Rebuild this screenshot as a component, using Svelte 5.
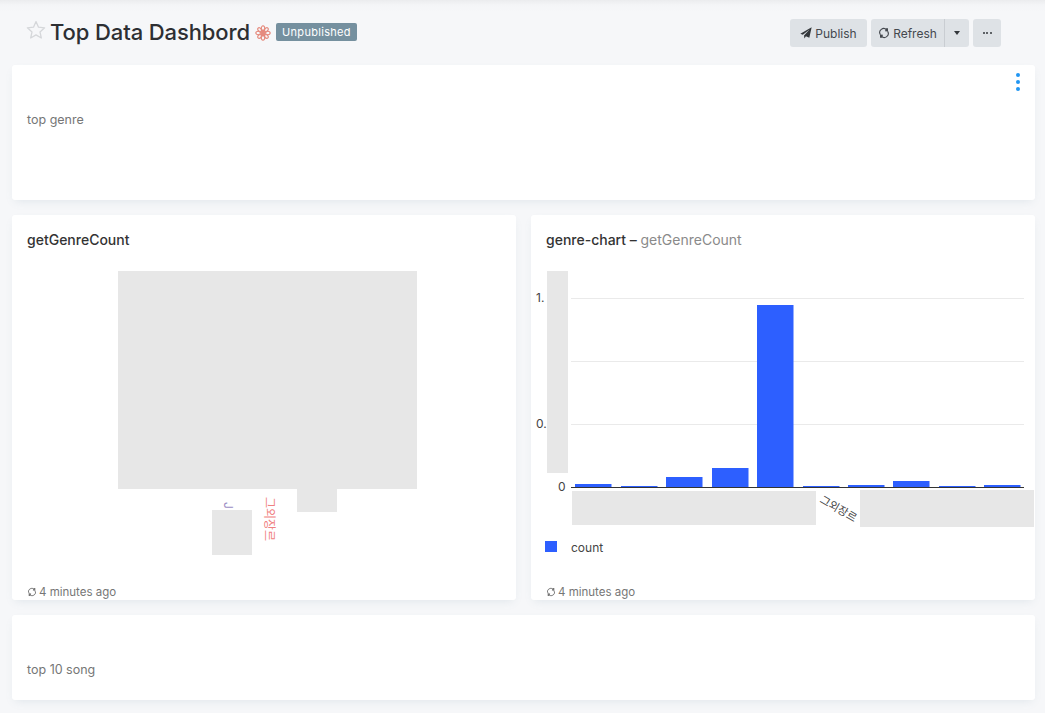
<script>
  const bars = [
    [575, 484], [621, 486], [666, 477], [712, 468], [757, 305],
    [803, 486], [848, 485], [893, 481], [939, 486], [984, 485]
  ];
</script>

{#snippet refresh()}
  <svg class="ico" viewBox="0 0 12 12" aria-hidden="true">
    <path d="M2.4 7.6A3.9 3.9 0 0 1 8.6 2.9" fill="none" stroke="currentColor" stroke-width="1.1" />
    <path d="M9.6 4.4A3.9 3.9 0 0 1 3.4 9.1" fill="none" stroke="currentColor" stroke-width="1.1" />
    <path d="M8 1.2 10 1.2 10 4.4 7 4.2Z" fill="currentColor" />
    <path d="M4 10.8 2 10.8 2 7.6 5 7.8Z" fill="currentColor" />
  </svg>
{/snippet}

<div class="page">
  <header class="head">
    <div class="title">
      <svg class="star" viewBox="0 0 20 20" aria-hidden="true">
        <path d="M10 1.6 12.5 7.2 18.6 7.8 14 11.9 15.3 18 10 14.9 4.7 18 6 11.9 1.4 7.8 7.5 7.2Z" fill="none" stroke="#d5d7da" stroke-width="1.3" stroke-linejoin="round" />
      </svg>
      <h1>Top Data Dashbord</h1>
      <svg class="spin" viewBox="0 0 16 16" aria-hidden="true">
        <g fill="none" stroke="#e58a7d" stroke-width="1.1">
          <ellipse cx="8" cy="4" rx="1.8" ry="3.2" />
          <ellipse cx="8" cy="12" rx="1.8" ry="3.2" />
          <ellipse cx="4" cy="8" rx="3.2" ry="1.8" />
          <ellipse cx="12" cy="8" rx="3.2" ry="1.8" />
          <ellipse cx="5.2" cy="5.2" rx="1.7" ry="3" transform="rotate(-45 5.2 5.2)" />
          <ellipse cx="10.8" cy="10.8" rx="1.7" ry="3" transform="rotate(-45 10.8 10.8)" />
          <ellipse cx="10.8" cy="5.2" rx="1.7" ry="3" transform="rotate(45 10.8 5.2)" />
          <ellipse cx="5.2" cy="10.8" rx="1.7" ry="3" transform="rotate(45 5.2 10.8)" />
        </g>
      </svg>
      <span class="badge">Unpublished</span>
    </div>
    <div class="actions">
      <button class="btn publish">
        <svg class="ico plane" viewBox="0 0 14 14" aria-hidden="true">
          <path d="M13.6.4 10.9 12.6 6.9 10.9 5.1 13.3 4.7 9.8 11.2 3 3.3 9.1.4 7.9Z" fill="currentColor" />
        </svg>
        Publish
      </button>
      <div class="split">
        <button class="btn refresh">{@render refresh()} Refresh</button>
        <button class="btn caret" aria-label="More refresh options"><span class="tri"></span></button>
      </div>
      <button class="btn more" aria-label="More options">
        <span class="dots"><i></i><i></i><i></i></span>
      </button>
    </div>
  </header>

  <section class="card text-one">
    <p>top genre</p>
    <span class="kebab"><i></i><i></i><i></i></span>
  </section>

  <div class="row">
    <section class="card viz">
      <h2>getGenreCount</h2>
      <div class="canvas">
        <svg viewBox="0 0 504 300" aria-hidden="false">
          <rect x="106" y="0" width="299" height="218" fill="#e7e7e7" />
          <rect x="285" y="218" width="40" height="23" fill="#e7e7e7" />
          <rect x="200" y="239" width="40" height="45" fill="#e7e7e7" />
          <text class="pie-j" transform="translate(212 231) rotate(90)">J</text>
          <text class="pie-other" transform="translate(253 226) rotate(90)">그외장르</text>
        </svg>
      </div>
      <div class="ago">{@render refresh()} 4 minutes ago</div>
    </section>

    <section class="card viz">
      <h2>genre-chart <b>–</b> <span>getGenreCount</span></h2>
      <div class="canvas">
        <svg viewBox="531 271 504 300">
          <line x1="571" x2="1024" y1="298.5" y2="298.5" class="grid" />
          <line x1="571" x2="1024" y1="361.5" y2="361.5" class="grid" />
          <line x1="571" x2="1024" y1="424.5" y2="424.5" class="grid" />
          <text class="tick" x="536" y="302">1.</text>
          <text class="tick" x="536" y="428">0.</text>
          <text class="tick" x="558" y="491">0</text>
          {#each bars as [x, top]}
            <rect {x} y={top} width="36.5" height={487 - top} fill="#2d5fff" />
          {/each}
          <line x1="571" x2="1024" y1="487.5" y2="487.5" stroke="#333" />
          <rect x="547" y="271" width="21" height="202" fill="#e7e7e7" />
          <rect x="572" y="491" width="244" height="34" fill="#e7e7e7" />
          <rect x="860" y="490" width="174" height="37" fill="#e7e7e7" />
          <text class="cat" transform="translate(819 502) rotate(30)">그외장르</text>
          <rect x="545" y="541" width="12" height="11" fill="#2d5fff" />
          <text class="legend" x="571" y="552">count</text>
        </svg>
      </div>
      <div class="ago">{@render refresh()} 4 minutes ago</div>
    </section>
  </div>

  <section class="card text-two">
    <p>top 10 song</p>
  </section>
</div>

<style>
  :global(body) {
    margin: 0;
    background: #f6f7f9;
  }
  .page {
    height: 713px;
    overflow: hidden;
    box-sizing: border-box;
    padding: 0 10px 0 12px;
    font-family: Inter, "Noto Sans CJK KR", sans-serif;
    color: #333;
    background: linear-gradient(#ebecee 0, #f4f5f7 5px, #f6f7f9 12px);
  }
  .head {
    height: 65px;
    display: flex;
    justify-content: space-between;
    box-sizing: border-box;
    padding: 19px 34px 0 14px;
    margin-right: -0px;
  }
  .title {
    display: flex;
    align-items: flex-start;
  }
  .star {
    width: 20px;
    height: 20px;
    margin-top: 1px;
    margin-right: 4px;
  }
  h1 {
    margin: 0;
    font-size: 22px;
    font-weight: 500;
    line-height: 26px;
    color: #2d2f33;
    letter-spacing: -0.1px;
  }
  .spin {
    width: 16px;
    height: 16px;
    margin: 6px 5px 0 5px;
  }
  .badge {
    margin-top: 4px;
    height: 18px;
    line-height: 18px;
    padding: 0 6px;
    font-size: 11px;
    letter-spacing: 0.3px;
    color: #fff;
    background: #75909f;
    border-radius: 2px;
  }
  .actions {
    display: flex;
    gap: 4px;
    align-items: flex-start;
  }
  .btn {
    height: 28px;
    border: 0;
    padding: 0;
    background: #dee2e6;
    color: #44484e;
    font: 12px Inter, sans-serif;
    display: flex;
    align-items: center;
    justify-content: center;
    gap: 3px;
    border-radius: 3px;
  }
  .publish {
    width: 77px;
  }
  .split {
    display: flex;
  }
  .refresh {
    width: 74px;
    border-radius: 3px 0 0 3px;
    border-right: 1px solid #c9cdd2;
  }
  .caret {
    width: 24px;
    border-radius: 0 3px 3px 0;
  }
  .tri {
    width: 0;
    height: 0;
    border: 4px solid transparent;
    border-top: 4px solid #33373b;
    border-bottom: 0;
    border-left-width: 3.5px;
    border-right-width: 3.5px;
  }
  .more {
    width: 28px;
  }
  .dots {
    display: flex;
    gap: 1.5px;
  }
  .dots i {
    width: 2px;
    height: 2px;
    background: #33373b;
    border-radius: 50%;
  }
  .ico {
    width: 12px;
    height: 12px;
    flex: none;
  }
  .plane {
    width: 12px;
    height: 12px;
    color: #33373b;
  }
  .card {
    position: relative;
    width: 1023px;
    background: #fff;
    border-radius: 3px;
    box-shadow: 0 4px 9px -3px rgba(102, 136, 153, 0.15);
    box-sizing: border-box;
  }
  .card p {
    margin: 0;
    font-size: 12.5px;
    color: #767676;
    padding-left: 15px;
  }
  .text-one {
    height: 135px;
    padding-top: 47px;
  }
  .text-two {
    height: 85px;
    margin-top: 15px;
    padding-top: 47px;
  }
  .kebab {
    position: absolute;
    top: 8px;
    right: 15px;
    display: flex;
    flex-direction: column;
    gap: 3px;
  }
  .kebab i {
    width: 4px;
    height: 4px;
    border-radius: 50%;
    background: #2196f3;
  }
  .row {
    display: flex;
    gap: 15px;
    margin-top: 15px;
  }
  .viz {
    width: 504px;
    height: 385px;
    padding-top: 16px;
  }
  h2 {
    margin: 0;
    padding-left: 15px;
    font-size: 14px;
    line-height: 17px;
    font-weight: 500;
    color: #333;
  }
  h2 span {
    color: #8a8a8a;
    font-weight: 400;
  }
  h2 b {
    font-weight: 500;
  }
  .canvas {
    height: 300px;
    margin-top: 23px;
  }
  .canvas svg {
    display: block;
    width: 504px;
    height: 300px;
  }
  .pie-j {
    font-size: 12px;
    fill: #9b8ec4;
  }
  .pie-other {
    font-size: 12px;
    fill: #f08080;
  }
  .grid {
    stroke: #eaeaea;
  }
  .tick {
    font-size: 12px;
    fill: #444;
  }
  .cat {
    font-size: 11px;
    fill: #444;
  }
  .legend {
    font-size: 12px;
    fill: #444;
  }
  .ago {
    display: flex;
    align-items: center;
    gap: 2px;
    margin-top: 14px;
    padding-left: 15px;
    font-size: 11.5px;
    line-height: 14px;
    color: #767676;
  }
  .ago .ico {
    width: 10px;
    height: 10px;
  }
</style>
